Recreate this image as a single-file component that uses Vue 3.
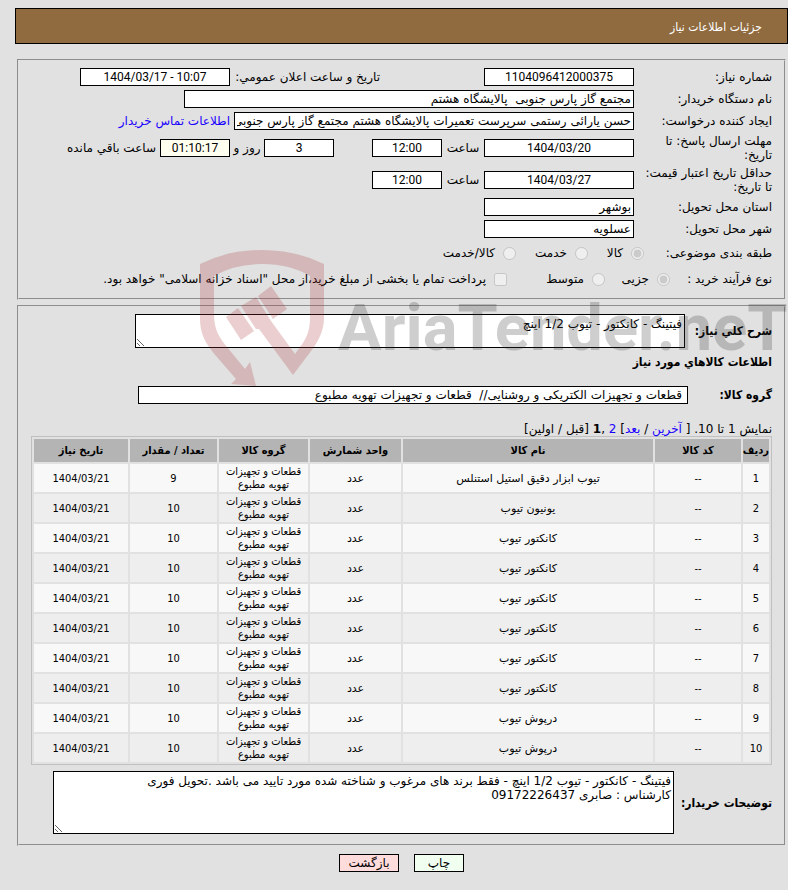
<template>
  <div class="page" dir="rtl">
    <h1 class="title-bar">جزئیات اطلاعات نیاز</h1>

    <section class="panel info-panel">
      <div class="row">
        <label class="row-label" for="needNo">شماره نیاز:</label>
        <input id="needNo" v-model="need.number" class="w-date center" type="text" readonly>
        <label class="announce-label" for="announce">تاریخ و ساعت اعلان عمومي:</label>
        <input id="announce" v-model="need.announce" class="w-date center" type="text" dir="ltr" readonly>
      </div>
      <div class="row">
        <label class="row-label" for="buyer">نام دستگاه خریدار:</label>
        <input id="buyer" v-model="need.buyer" class="w-buyer" type="text" readonly>
      </div>
      <div class="row">
        <label class="row-label" for="creator">ایجاد کننده درخواست:</label>
        <input id="creator" v-model="need.creator" class="w-creator" type="text" readonly>
        <a class="contact" href="#">اطلاعات تماس خریدار</a>
      </div>
      <div class="row tall">
        <label class="row-label" for="deadline">مهلت ارسال پاسخ: تا تاریخ:</label>
        <input id="deadline" v-model="need.deadline" class="w-date center" type="text" readonly>
        <label class="hour-label" for="deadlineHour">ساعت</label>
        <input id="deadlineHour" v-model="need.deadlineHour" class="w-time center" type="text" readonly>
        <div class="remaining">
          <input id="days" v-model="need.days" class="w-time center" type="text" readonly>
          <label class="day-label" for="days">روز و</label>
          <input id="remain" v-model="need.remain" class="w-time center remain" type="text" readonly>
          <label class="remain-label" for="remain">ساعت باقي مانده</label>
        </div>
      </div>
      <div class="row tall">
        <label class="row-label" for="validity">حداقل تاریخ اعتبار قیمت: تا تاریخ:</label>
        <input id="validity" v-model="need.validity" class="w-date center" type="text" readonly>
        <label class="hour-label" for="validityHour">ساعت</label>
        <input id="validityHour" v-model="need.validityHour" class="w-time center" type="text" readonly>
      </div>
      <div class="row">
        <label class="row-label" for="province">استان محل تحویل:</label>
        <input id="province" v-model="need.province" class="w-date" type="text" readonly>
      </div>
      <div class="row">
        <label class="row-label" for="city">شهر محل تحویل:</label>
        <input id="city" v-model="need.city" class="w-date" type="text" readonly>
      </div>
      <div class="row options subject">
        <span>طبقه بندی موضوعی:</span>
        <label v-for="item in subjects" :key="item" class="option">
          <input v-model="subject" type="radio" name="subject" :value="item" disabled>
          {{ item }}
        </label>
      </div>
      <div class="row options process">
        <span>نوع فرآیند خرید :</span>
        <label v-for="item in processes" :key="item" class="option">
          <input v-model="process" type="radio" name="process" :value="item" disabled>
          {{ item }}
        </label>
        <label class="option">
          <input v-model="treasury" type="checkbox" disabled>
          پرداخت تمام یا بخشی از مبلغ خرید،از محل "اسناد خزانه اسلامی" خواهد بود.
        </label>
      </div>
    </section>

    <section class="panel goods-panel">
      <div class="summary">
        <label for="summary">شرح کلي نیاز:</label>
        <textarea id="summary" v-model="need.summary" readonly></textarea>
      </div>
      <h2>اطلاعات کالاهاي مورد نیاز</h2>
      <div class="group">
        <label for="group">گروه کالا:</label>
        <input id="group" v-model="need.group" type="text" readonly>
      </div>

      <div class="pager">
        نمایش 1 تا 10. [ <a href="#">آخرین</a> / <a href="#">بعد</a>] <a href="#">2</a> ,<b>1</b> [قبل / اولین]
      </div>
      <table class="goods">
        <colgroup>
          <col class="c-row">
          <col class="c-code">
          <col>
          <col class="c-unit">
          <col class="c-group">
          <col class="c-count">
          <col class="c-date">
        </colgroup>
        <thead>
          <tr>
            <th v-for="head in heads" :key="head">{{ head }}</th>
          </tr>
        </thead>
        <tbody>
          <tr v-for="(item, index) in goods" :key="index">
            <td>{{ index + 1 }}</td>
            <td>--</td>
            <td class="wide">{{ item.name }}</td>
            <td class="wide">عدد</td>
            <td>قطعات و تجهیزات تهویه مطبوع</td>
            <td>{{ item.count }}</td>
            <td>1404/03/21</td>
          </tr>
        </tbody>
      </table>

      <div class="notes">
        <label for="notes">توضیحات خریدار:</label>
        <textarea id="notes" v-model="need.notes" readonly></textarea>
      </div>
    </section>

    <div class="actions">
      <button type="button" class="print" @click="printPage">چاپ</button>
      <button type="button" class="back" @click="goBack">بازگشت</button>
    </div>

    <div class="watermark" dir="ltr" aria-hidden="true">
      <svg width="124" height="137" viewBox="200 250 124 137">
        <path d="M200 264 Q228 250 262 250 Q296 250 324 264 V318 C324 336 312 350 305 359 L293 375 L259 329 L256 329 L241 306 L256 297 L271 321 L295 354 C303 343 310 336 310 318 V276 Q290 264 262 264 Q234 264 214 276 V314 C214 331 220 338 227 347 L245 369 L250 362 L256 386 L231 384 L236 379 L217 357 C209 347 200 338 200 318 Z" />
        <path d="M226 317 L238 308 L254 331 L241 340 Z M258 296 L271 286 L287 309 L273 319 Z" />
      </svg>
      <span>AriaTender.neT</span>
    </div>
  </div>
</template>

<script setup>
import { ref, reactive } from 'vue';

const need = reactive({
  number: '1104096412000375',
  announce: '1404/03/17 - 10:07',
  buyer: 'مجتمع گاز پارس جنوبی  پالایشگاه هشتم',
  creator: 'حسن یارائی رستمی سرپرست تعمیرات پالایشگاه هشتم مجتمع گاز پارس جنوبی',
  deadline: '1404/03/20',
  deadlineHour: '12:00',
  days: '3',
  remain: '01:10:17',
  validity: '1404/03/27',
  validityHour: '12:00',
  province: 'بوشهر',
  city: 'عسلویه',
  summary: 'فیتینگ - کانکتور - تیوب 1/2 اینچ',
  group: 'قطعات و تجهیزات الکتریکی و روشنایی//  قطعات و تجهیزات تهویه مطبوع',
  notes: 'فیتینگ - کانکتور - تیوب 1/2 اینچ - فقط برند های مرغوب و شناخته شده مورد تایید می باشد .تحویل فوری\nکارشناس : صابری 09172226437',
});

const subjects = ['کالا', 'خدمت', 'کالا/خدمت'];
const subject = ref('کالا');

const processes = ['جزیی', 'متوسط'];
const process = ref('جزیی');
const treasury = ref(false);

const heads = ['ردیف', 'کد کالا', 'نام کالا', 'واحد شمارش', 'گروه کالا', 'تعداد / مقدار', 'تاریخ نیاز'];

const goods = ref([
  { name: 'تیوب ابزار دقیق استیل استنلس', count: 9 },
  { name: 'یونیون تیوب', count: 10 },
  { name: 'کانکتور تیوب', count: 10 },
  { name: 'کانکتور تیوب', count: 10 },
  { name: 'کانکتور تیوب', count: 10 },
  { name: 'کانکتور تیوب', count: 10 },
  { name: 'کانکتور تیوب', count: 10 },
  { name: 'کانکتور تیوب', count: 10 },
  { name: 'درپوش تیوب', count: 10 },
  { name: 'درپوش تیوب', count: 10 },
]);

const printPage = () => {
  window.print();
};

const goBack = () => {
  window.history.back();
};
</script>

<style>
body {
  background-color: #e1e1e1;
}
</style>

<style scoped>
.page {
  position: relative;
  padding: 8px 0 16px 15px;
  overflow: hidden;
  font-family: Tahoma, "DejaVu Sans", sans-serif;
  font-size: 12px;
  line-height: 14px;
  color: #000;
}

.title-bar {
  box-sizing: border-box;
  height: 36px;
  margin: 0 0 15px;
  padding: 0 25px;
  border: 1px solid #000;
  background-color: #8f6b3f;
  color: #fff;
  font-size: 12px;
  font-weight: normal;
  line-height: 36px;
}

.title-bar,
h2,
.summary label,
.group label,
.notes label {
  font-family: Tahoma, "DejaVu Sans Condensed", "DejaVu Sans", sans-serif;
}

.panel {
  margin: 0 2px;
  border: 2px groove #e1e1e1;
}

.info-panel {
  padding: 5px 12px 6px;
}

.goods-panel {
  margin-top: 5px;
  padding: 7px 12px 10px;
}

/* ردیف های فرم */
.row {
  display: flex;
  align-items: center;
  height: 22px;
  white-space: nowrap;
}

.row.tall {
  height: 32px;
}

.row-label {
  flex: none;
  width: 128px;
  margin-left: 10px;
  white-space: normal;
}

input[type="text"],
textarea {
  box-sizing: border-box;
  margin: 0;
  border: 1px solid #000;
  border-radius: 0;
  background-color: #fff;
  color: #000;
  font: inherit;
  outline: none;
}

input[type="text"] {
  flex: none;
  height: 18px;
  padding: 0 2px;
}

input.center {
  font-family: Tahoma, Roboto, "DejaVu Sans", sans-serif;
  text-align: center;
}

.w-date {
  width: 150px;
}

.w-time {
  width: 70px;
}

.w-buyer {
  width: 450px;
}

.w-creator {
  width: 400px;
}

.announce-label {
  width: 146px;
  margin-right: 104px;
  margin-left: 4px;
}

.contact {
  margin-right: 4px;
}

a {
  color: #1a00ff;
  text-decoration: none;
}

.hour-label {
  width: 42px;
  text-align: center;
}

.remaining {
  display: flex;
  align-items: center;
  margin-right: 38px;
}

.day-label {
  width: 34px;
  text-align: center;
}

.remain-label {
  margin-right: 4px;
}

input.remain {
  background-color: #fffff0;
}

.options {
  display: grid;
  height: 26px;
}

.subject {
  grid-template-columns: 128px 56px 72px 1fr;
}

.process {
  grid-template-columns: 102px 65px 98px 1fr;
}

.option {
  display: flex;
  align-items: center;
  gap: 8px;
}

.option input {
  width: 13px;
  height: 13px;
  margin: 0;
}

/* کالاها */
.summary,
.group,
.notes {
  display: flex;
  align-items: center;
  font-weight: bold;
}

textarea {
  padding: 2px;
  font-weight: normal;
}

.summary label {
  flex: none;
  width: 84px;
  margin-left: 3px;
  white-space: nowrap;
}

.summary textarea {
  width: 550px;
  height: 34px;
}

h2 {
  margin: 7px 0 17px;
  font-size: 12px;
  line-height: 14px;
}

.group label {
  width: 84px;
}

.group input[type="text"] {
  width: 550px;
  padding: 0 5px;
  font-weight: normal;
}

.pager {
  margin-top: 18px;
  white-space: nowrap;
}

.goods {
  width: 100%;
  table-layout: fixed;
  border: 1px solid #c0c0c0;
  border-collapse: separate;
  border-spacing: 2px;
  font-family: Tahoma, "DejaVu Sans Condensed", "DejaVu Sans", sans-serif;
  font-size: 11px;
  line-height: 13px;
  text-align: center;
}

.goods th,
.goods td {
  height: 28px;
  padding: 0;
}

.goods th {
  height: 23px;
  background-color: #b4b4b4;
  white-space: nowrap;
}

.goods td {
  background-color: #f8f8f8;
}

.goods .wide {
  font-family: Tahoma, "DejaVu Sans", sans-serif;
}

.goods tbody tr:nth-child(even) td {
  background-color: #eee;
}

.c-row {
  width: 26px;
}

.c-code {
  width: 86px;
}

.c-unit {
  width: 91px;
}

.c-group {
  width: 89px;
}

.c-count {
  width: 87px;
}

.c-date {
  width: 94px;
}

.notes {
  margin-top: 6px;
}

.notes label {
  flex: none;
  width: 94px;
  margin-left: 4px;
  white-space: nowrap;
}

.notes textarea {
  flex: 1;
  height: 63px;
  margin-left: 22px;
}

.actions {
  display: flex;
  justify-content: center;
  gap: 15px;
  margin-top: 8px;
}

.actions button {
  width: 60px;
  height: 18px;
  padding: 0;
  border: 1px solid #000;
  font: inherit;
  cursor: pointer;
}

.actions .print {
  width: 50px;
  background-color: #f0fff0;
}

.actions .back {
  background-color: #ffdcdc;
}

.watermark {
  position: absolute;
  top: 250px;
  left: 200px;
  display: flex;
  gap: 14px;
  opacity: 0.23;
  pointer-events: none;
}

.watermark svg {
  flex: none;
  fill: #ad3034;
}

.watermark span {
  padding-top: 34px;
  color: #323232;
  font-family: Roboto, "Liberation Sans", sans-serif;
  font-size: 65px;
  font-weight: bold;
  line-height: 88px;
  white-space: nowrap;
}
</style>
